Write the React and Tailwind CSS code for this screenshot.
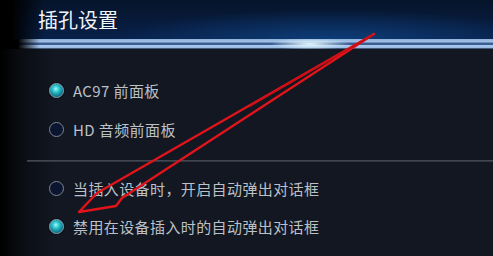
import React from 'react';

const options = [
  { label: 'AC97 前面板', on: true },
  { label: 'HD 音频前面板', on: false },
];

const popupOptions = [
  { label: '当插入设备时，开启自动弹出对话框', on: false },
  { label: '禁用在设备插入时的自动弹出对话框', on: true },
];

const Radio = ({ on }) => {
  if (on) {
    return (
      <span className="block w-[15px] h-[15px] rounded-full border border-[#8fa2b0] bg-[radial-gradient(circle_at_45%_38%,#9ff8f8_0,#2ec4cf_30%,#0c7c92_65%,#063248_100%)] shadow-[0_0_2px_#000]" />
    );
  }
  return <span className="block w-[15px] h-[15px] rounded-full border-[1.5px] border-[#7c8592] bg-[#0b1530]" />;
};

const Row = ({ label, on }) => (
  <div className="flex items-center h-[22px] gap-[9px]">
    <Radio on={on} />
    <span className="text-[15px] tracking-[0.4px] text-[#bcc0c7] leading-none">{label}</span>
  </div>
);

// red annotation arrow drawn over the dialog
const Arrow = () => (
  <svg className="absolute inset-0 pointer-events-none" width="493" height="256" viewBox="0 0 493 256">
    <path
      d="M374 34 L97 193 L79 212 L116 206 L122 198 Z"
      fill="none"
      stroke="#e0141a"
      strokeWidth="2.4"
      strokeLinejoin="round"
    />
    <path d="M373 35 L250 106" stroke="#c80e14" strokeWidth="1.5" fill="none" />
  </svg>
);

export default function App() {
  return (
    <div
      className="relative w-[493px] h-[256px] overflow-hidden bg-[#121722]"
      style={{ fontFamily: '"Noto Sans CJK SC", "Noto Sans", sans-serif' }}
    >
      <div className="h-[39px] pl-[38px] pt-[7px] bg-[linear-gradient(to_right,#000_0,#000_12px,transparent_45px),radial-gradient(ellipse_220px_30px_at_330px_40px,#0d3d78,transparent),linear-gradient(to_bottom,#06142a,#082049)]">
        <h1 className="text-[20px] leading-[26px] text-[#f1f4f8] font-normal">插孔设置</h1>
      </div>

      <div className="h-[10px] bg-[linear-gradient(to_right,#000_0,#000_18px,transparent_40px),radial-gradient(ellipse_40px_6px_at_310px_5px,#e6faff,transparent),linear-gradient(to_bottom,#90b2da_0,#a4c2e8_30%,#3b5d92_40%,#3b5d92_55%,#a9caf0_60%,#9cbce4_85%,#1a2a45_100%)]" />

      <div className="pl-[49px] pt-[30px] bg-[linear-gradient(to_right,#000_0,#0a0d13_22px,#121722_55px)] h-[207px]">
        <div className="flex flex-col gap-[17px]">
          {options.map((o) => (
            <Row key={o.label} {...o} />
          ))}
        </div>
        <div className="-ml-[22px] mt-[20px] h-[2px] bg-[linear-gradient(to_bottom,#4a4f58,#2a2e36)]" />
        <div className="flex flex-col gap-[16px] mt-[15px]">
          {popupOptions.map((o) => (
            <Row key={o.label} {...o} />
          ))}
        </div>
      </div>

      <Arrow />
    </div>
  );
}
